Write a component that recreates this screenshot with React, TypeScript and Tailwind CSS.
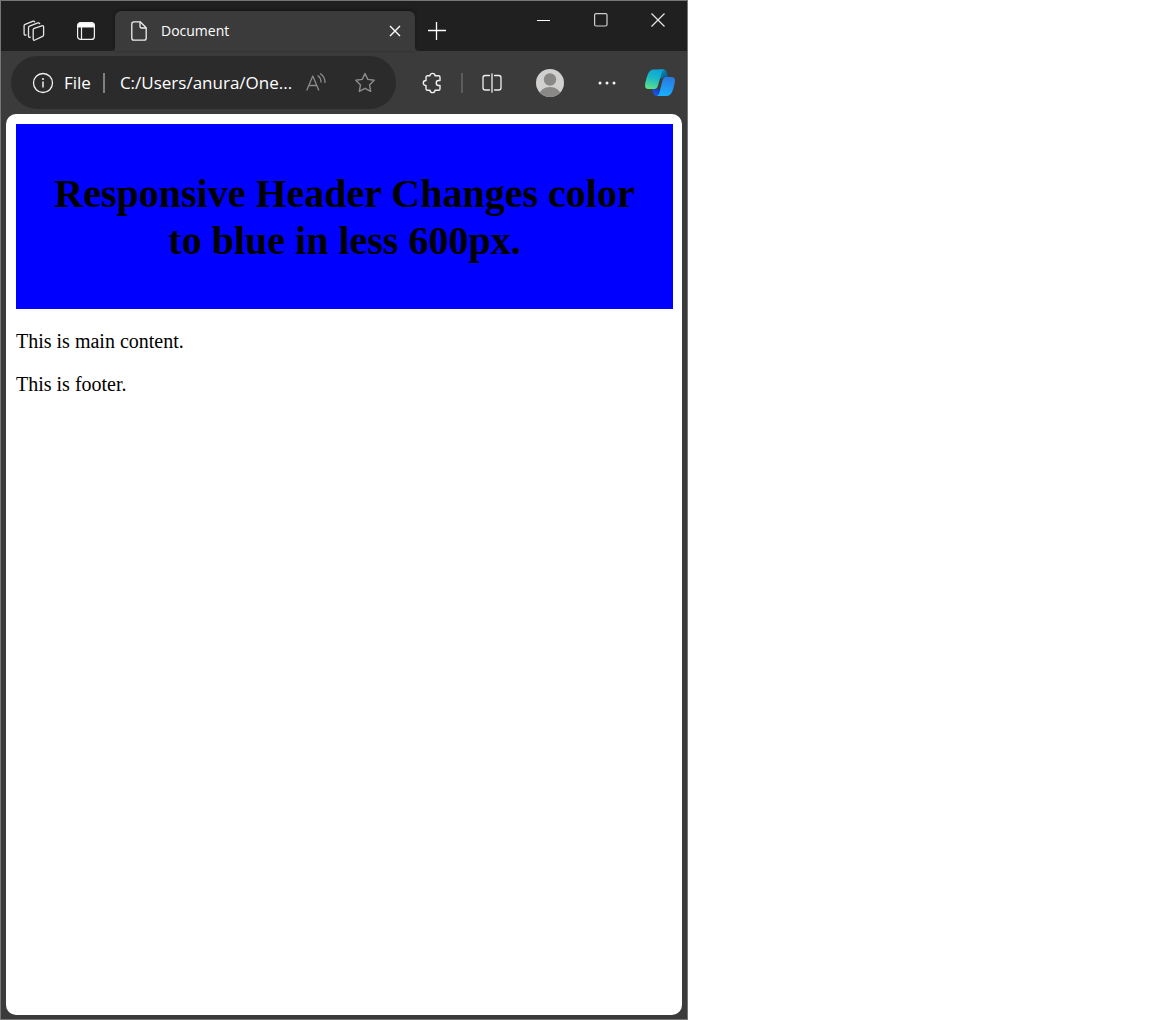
import type { ReactNode } from "react";

function IconButton({ label, className, children }: { label: string; className: string; children: ReactNode }) {
  return (
    <button type="button" aria-label={label} className={`flex shrink-0 items-center justify-center ${className}`}>
      {children}
    </button>
  );
}

function WorkspacesIcon() {
  return (
    <svg width="22" height="22" viewBox="0 0 22 22" fill="none" stroke="#e4e4e4" strokeWidth="1.3" strokeLinejoin="round" strokeLinecap="round">
      <path d="M11.2 8.4 18.800 5.800q1.800-.5 1.800 1.200v7.900q0 1-1 1.400l-7.600 3.700q-1.800.8-1.800-1V9.700q0-.9 1-1.300z" />
      <path d="M7.300 17.200q-1.800.5-1.800-1.200V7.600q0-1 1-1.400l8.300-3.300q1.400-.4 1.900.8" />
      <path d="M3 15q-1.900.4-1.900-1.200V5.700q0-1 1-1.400l7.500-3q1.500-.5 2 .5" />
    </svg>
  );
}

function TabActionsIcon() {
  return (
    <svg width="18" height="18" viewBox="0 0 18 18" fill="none" stroke="#f2f2f2" strokeWidth="1.2">
      <rect x=".6" y=".6" width="16.8" height="16.8" rx="3" />
      <path d="M1 5V3.500Q1 1 3.500 1h11Q17 1 17 3.500V5z" fill="#fff" />
      <path d="M4.500 5v12" />
    </svg>
  );
}

function PageIcon() {
  return (
    <svg width="16" height="20" viewBox="0 0 16 20" fill="none" stroke="#f0f0f0" strokeWidth="1.3" strokeLinejoin="round">
      <path d="M3 .8h6.200L15.200 6.800V17q0 2.200-2.200 2.200H3Q.8 19.200.8 17V3Q.8.8 3 .8z" />
      <path d="M9 1v4.300Q9 7 10.700 7H15" />
    </svg>
  );
}

function InfoIcon() {
  return (
    <svg width="22" height="22" viewBox="0 0 22 22" fill="none" stroke="#f2f2f2" strokeWidth="1.3">
      <circle cx="11" cy="11" r="9.500" />
      <path d="M11 9.500v6" strokeWidth="1.500" />
      <circle cx="11" cy="7" r="1" fill="#f2f2f2" stroke="none" />
    </svg>
  );
}

function ReadAloudIcon() {
  return (
    <svg width="20" height="20" viewBox="0 0 20 20" fill="none" stroke="#8c8c8c" strokeWidth="1.3" strokeLinecap="round" strokeLinejoin="round">
      <path d="M.9 17 6.800 3 12.700 17M3 12.500h7.600" />
      <path d="M12 2.800Q15 5 15 9M14.500.8Q19 4 19 9.500" />
    </svg>
  );
}

function StarIcon() {
  return (
    <svg width="22" height="22" viewBox="0 0 22 22" fill="none" stroke="#8c8c8c" strokeWidth="1.4" strokeLinejoin="round">
      <path d="m11 1.500 2.800 5.900 6.400.9-4.700 4.600 1.200 6.500-5.700-3.100-5.700 3.100 1.200-6.500-4.700-4.600 6.400-.9z" />
    </svg>
  );
}

function ExtensionsIcon() {
  return (
    <svg width="20" height="22" viewBox="0 0 20 22" fill="none" stroke="#f0f0f0" strokeWidth="1.400" strokeLinejoin="round">
      <path d="M8 3.800C8 .6 13 .6 13 3.800H16.500Q18 3.800 18 5.300V8.500H16.500C13.500 8.500 13.500 13.500 16.500 13.500H18V16.700Q18 18.200 16.500 18.200H13C13 21.400 8 21.400 8 18.200H5.500Q4 18.200 4 16.700V13.500C.4 13.500.4 8.500 4 8.500V5.300Q4 3.800 5.500 3.800z" />
    </svg>
  );
}

function SplitScreenIcon() {
  return (
    <svg width="20" height="20" viewBox="0 0 20 20" fill="none" stroke="#f0f0f0" strokeWidth="1.3" strokeLinecap="round">
      <path d="M7.500 2.500H3.200Q1 2.500 1 4.700v10.100Q1 17 3.200 17h4.300M12.500 2.500h4.300Q19 2.500 19 4.700v10.100Q19 17 16.800 17h-4.300" />
      <path d="M10 .8v18.400" />
    </svg>
  );
}

function ProfileIcon() {
  return (
    <svg width="28" height="28" viewBox="0 0 28 28">
      <clipPath id="avatar">
        <circle cx="14" cy="14" r="14" />
      </clipPath>
      <g clipPath="url(#avatar)">
        <rect width="28" height="28" fill="#d2d0ce" />
        <circle cx="14" cy="10.500" r="6.200" fill="#8a8886" />
        <ellipse cx="14" cy="26" rx="10.500" ry="8" fill="#8a8886" />
      </g>
    </svg>
  );
}

function CopilotIcon() {
  return (
    <svg width="32" height="28" viewBox="0 0 32 28">
      <defs>
        <linearGradient id="cpLeft" x1="0.6" y1="0" x2="0.3" y2="1">
          <stop offset="0" stopColor="#0ba4dc" />
          <stop offset=".45" stopColor="#1bb9c5" />
          <stop offset="1" stopColor="#5fe08b" />
        </linearGradient>
        <linearGradient id="cpRight" x1="0.6" y1="0" x2="0.4" y2="1">
          <stop offset="0" stopColor="#2a78e0" />
          <stop offset="1" stopColor="#18b0ff" />
        </linearGradient>
        <linearGradient id="cpTop" x1="0" y1="0" x2="1" y2="1">
          <stop offset="0" stopColor="#0b9ac9" />
          <stop offset="1" stopColor="#0a4f78" />
        </linearGradient>
        <linearGradient id="cpBottom" x1="0" y1="1" x2="1" y2="0">
          <stop offset="0" stopColor="#2260f5" />
          <stop offset="1" stopColor="#1733a8" />
        </linearGradient>
      </defs>
      <path d="M14 .5h5.500Q22 .5 22.800 3.500L24.500 8H20.500Q18.500 8 17.800 10L14 8z" fill="url(#cpTop)" />
      <path d="M8 20h9.500L14.500 27H12.500Q10.300 27 9.500 24.600z" fill="url(#cpBottom)" />
      <path d="M9.500.5H20.500Q18.300 1.200 17.500 4.200L14 16.500Q13 20 10.500 20H4.500Q.2 20 1.200 14.500Q2.200 9 4 5Q5.800.5 9.500.5z" fill="url(#cpLeft)" />
      <path d="M22.500 27H12.800Q14.600 26.300 15.300 24L18.500 11.500Q19.500 8 22 8H27.500Q31.800 8 30.800 13.500Q29.800 19 28 23Q26.200 27 22.500 27z" fill="url(#cpRight)" />
    </svg>
  );
}

function TitleBar() {
  return (
    <div className="flex h-[50px] bg-[#202020]">
      <IconButton label="Workspaces" className="mt-[10px] ml-2 h-10 w-[50px]">
        <WorkspacesIcon />
      </IconButton>
      <IconButton label="Tab actions menu" className="mt-[10px] ml-[2px] h-10 w-[50px]">
        <TabActionsIcon />
      </IconButton>
      <div className="mt-[10px] flex min-w-0 flex-1 items-center overflow-x-clip">
        <div className="size-1 shrink-0 self-end bg-[#3b3b3b]">
          <div className="size-full rounded-br-sm bg-[#202020]" />
        </div>
        <div className="flex h-full w-[300px] min-w-0 items-center rounded-t-md bg-[#3b3b3b] pr-2 pl-4 shadow-[0_-1px_3px_#141414]">
          <PageIcon />
          <span className="ml-[14px] flex-1 truncate text-[14px] leading-5 text-white">Document</span>
          <IconButton label="Close tab" className="size-6">
            <svg width="12" height="12" viewBox="0 0 12 12" stroke="#fff" strokeWidth="1.400">
              <path d="m1 1 10 10M11 1 1 11" />
            </svg>
          </IconButton>
        </div>
        <div className="size-1 shrink-0 self-end bg-[#3b3b3b]">
          <div className="size-full rounded-bl-sm bg-[#202020]" />
        </div>
        <IconButton label="New tab" className="size-9">
          <svg width="18" height="18" viewBox="0 0 18 18" stroke="#fff" strokeWidth="1.300">
            <path d="M8.500 0v18M0 8.500h18" />
          </svg>
        </IconButton>
      </div>
      <div className="mr-px flex shrink-0">
        <IconButton label="Minimize" className="h-[38px] w-[57px]">
          <svg width="14" height="14" viewBox="0 0 14 14" stroke="#fff">
            <path d="M0 7.500h13" />
          </svg>
        </IconButton>
        <IconButton label="Maximize" className="h-[38px] w-[57px]">
          <svg width="14" height="14" viewBox="0 0 14 14" fill="none" stroke="#d0d0d0" strokeWidth="1.200">
            <rect x=".6" y=".6" width="12.400" height="12.400" rx="1.500" />
          </svg>
        </IconButton>
        <IconButton label="Close" className="h-[38px] w-[57px]">
          <svg width="14" height="14" viewBox="0 0 14 14" stroke="#e8e8e8" strokeWidth="1.200">
            <path d="m.5.5 13 13M13.500.5l-13 13" />
          </svg>
        </IconButton>
      </div>
    </div>
  );
}

function Toolbar() {
  return (
    <div className="flex h-[63px] items-center pl-[10px]">
      <div className="flex h-[53px] min-w-0 flex-1 items-center rounded-full bg-[#2b2b2b] pr-[13px] pl-[21px] text-[17px] leading-6 text-white">
        <button type="button" className="flex shrink-0 items-center gap-[10px]">
          <InfoIcon />
          File
        </button>
        <span className="mr-[15px] ml-3 h-5 w-[2px] shrink-0 bg-[#808080]" />
        <input
          aria-label="Address"
          defaultValue="C:/Users/anura/One..."
          className="w-0 min-w-0 flex-1 bg-transparent outline-none"
        />
        <IconButton label="Read aloud" className="size-9">
          <ReadAloudIcon />
        </IconButton>
        <IconButton label="Add to favorites" className="ml-[13px] size-9">
          <StarIcon />
        </IconButton>
      </div>
      <IconButton label="Extensions" className="ml-4 size-10">
        <ExtensionsIcon />
      </IconButton>
      <span className="mx-[9px] h-5 w-[2px] shrink-0 bg-[#5c5c5c]" />
      <IconButton label="Split screen" className="size-10">
        <SplitScreenIcon />
      </IconButton>
      <IconButton label="Profile" className="ml-[18px] size-10">
        <ProfileIcon />
      </IconButton>
      <IconButton label="Settings and more" className="ml-[17px] size-10">
        <svg width="18" height="4" viewBox="0 0 18 4" fill="#f4f4f4">
          <circle cx="2" cy="2" r="1.500" />
          <circle cx="9" cy="2" r="1.500" />
          <circle cx="16" cy="2" r="1.500" />
        </svg>
      </IconButton>
      <IconButton label="Copilot" className="mr-[7px] ml-[13px] size-10">
        <CopilotIcon />
      </IconButton>
    </div>
  );
}

function PageContent() {
  return (
    <main className="mx-[5px] mb-1 flex-1 rounded-[10px] bg-white pt-[10px] pr-[9px] pl-[10px] font-['Liberation_Serif',serif] text-[20px] leading-[22px] text-black">
      <header className="bg-[#0000ff] px-6 pt-[46px] pb-[45px] text-center">
        <h1 className="text-[40px] leading-[47px] font-bold">Responsive Header Changes color to blue in less 600px.</h1>
      </header>
      <p className="mt-[21px]">This is main content.</p>
      <footer className="mt-[21px]">This is footer.</footer>
    </main>
  );
}

export default function App() {
  return (
    <div className="min-h-screen bg-white font-['Open_Sans',sans-serif]">
      <div className="flex min-h-screen w-full max-w-[688px] flex-col border border-[#767676] bg-[#3b3b3b]">
        <TitleBar />
        <Toolbar />
        <PageContent />
      </div>
    </div>
  );
}
